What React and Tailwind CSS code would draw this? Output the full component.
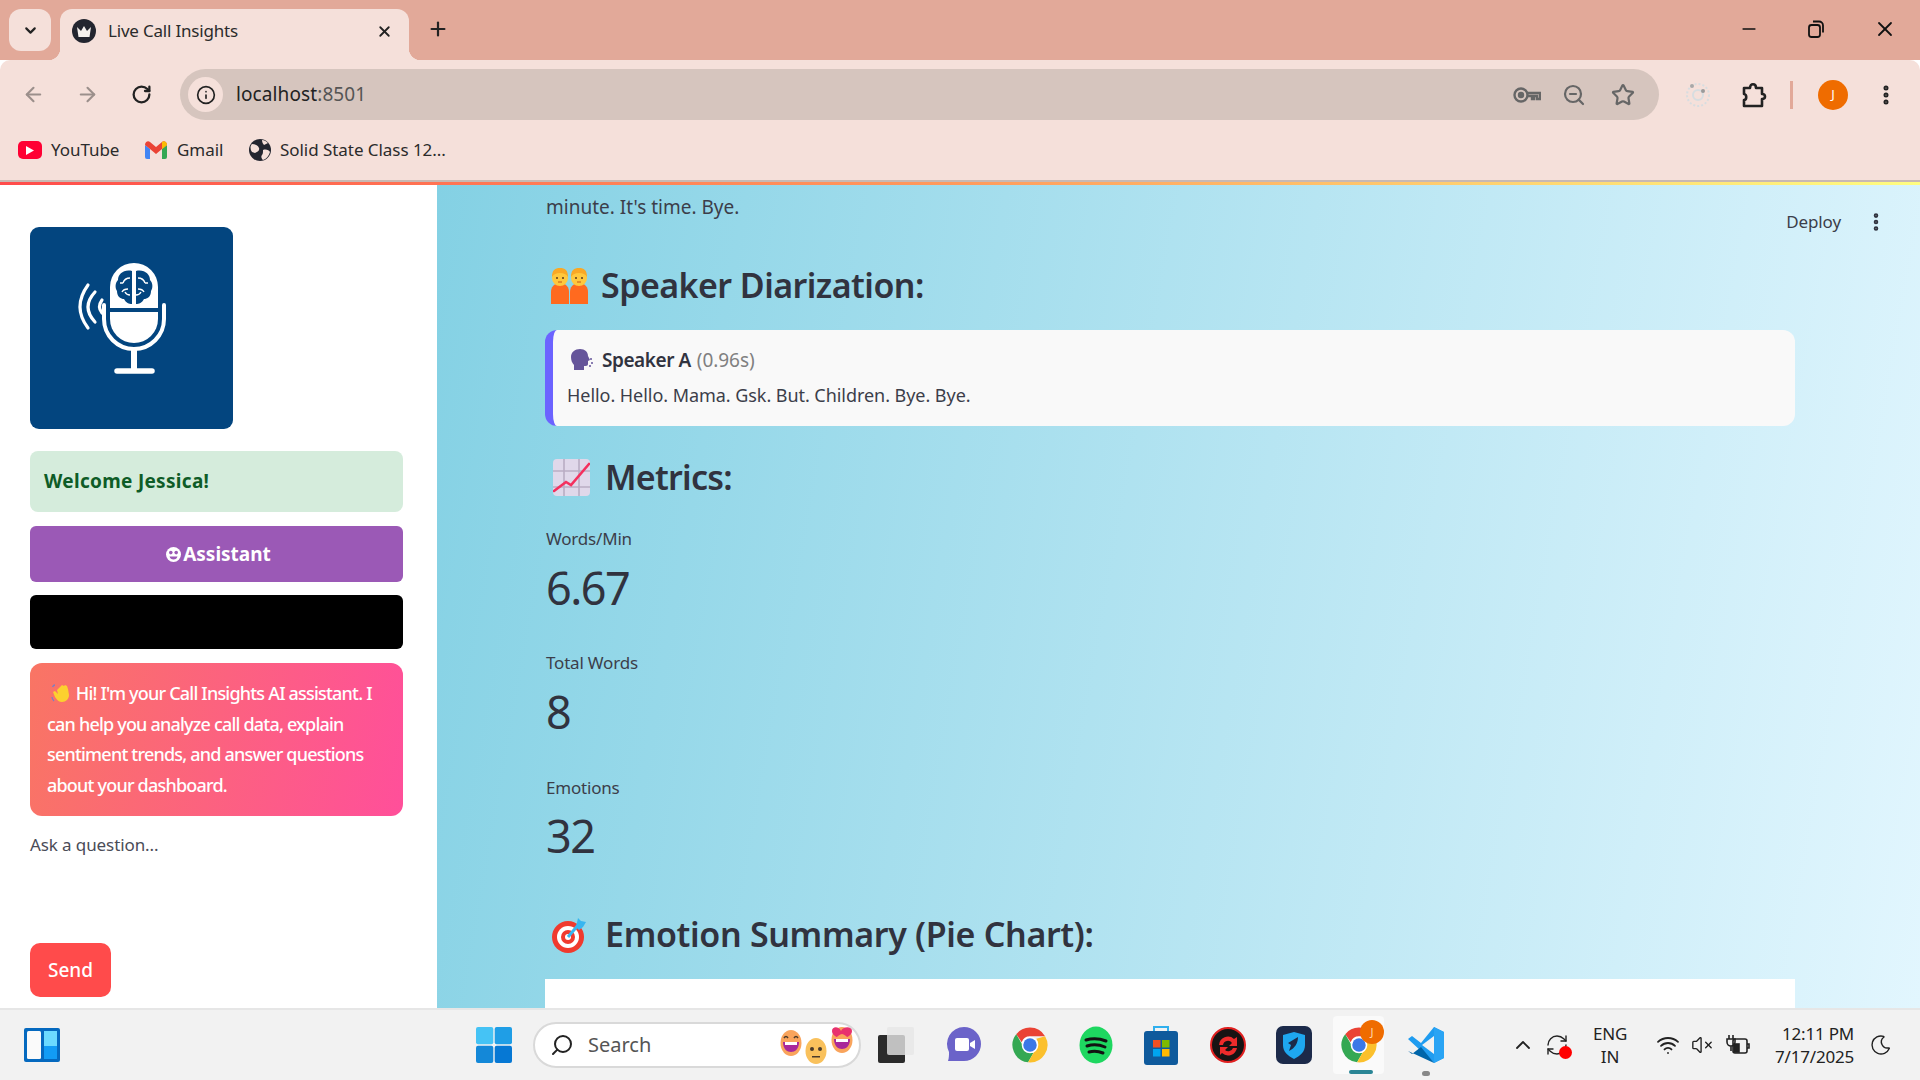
import React from 'react';
import { ArrowLeft, ArrowRight, RotateCw, Info, ZoomOut, Star, EllipsisVertical, X, Plus, ChevronDown, ChevronUp, Minus, Search, RefreshCw, Wifi, VolumeX, Moon } from 'lucide-react';

function ChromeLogo({ size = 38 }) {
  return (
    <svg width={size} height={size} viewBox="0 0 48 48">
      <path d="M24 2a22 22 0 0 1 19.05 11H24a11 11 0 0 0-10.4 7.4L6.6 10.4A22 22 0 0 1 24 2z" fill="#ea4335" />
      <path d="M6.6 10.4 16 26.6a11 11 0 0 0 12.6 6.9L21.6 45.9A22 22 0 0 1 6.6 10.4z" fill="#34a853" />
      <path d="M43.05 13A22 22 0 0 1 21.6 45.9l9.4-16.4A11 11 0 0 0 32 16z" fill="#fbc02d" />
      <circle cx="24" cy="24" r="10.5" fill="#fff" />
      <circle cx="24" cy="24" r="8.5" fill="#3b78e7" />
    </svg>
  );
}

function MicLogo() {
  return (
    <svg width="203" height="202" viewBox="0 0 203 202">
      <path d="M80 81V60a24 24 0 0 1 48 0v21z" fill="#fff" />
      <path d="M102 44c-8-2-14 3-14 9-3 3-3 8-1 11 0 6 4 8 7 8 2 4 5 5 8 5z" fill="#03457f" />
      <path d="M106 44c8-2 14 3 14 9 3 3 3 8 1 11 0 6-4 8-7 8-2 4-5 5-8 5z" fill="#03457f" />
      <path d="M100 51c-4 0-6 2-7 5m0 0h-3m8 6c-3 0-5 1-6 3m3 0c1 2 3 3 5 3M108 51c4 0 6 2 7 5m0 0h3m-10 6c3 0 5 1 6 3m-3 0c-1 2-3 3-5 3" fill="none" stroke="#fff" strokeWidth="1.4" />
      <path d="M80 85h48v7a24 24 0 0 1-48 0z" fill="#fff" />
      <path d="M74 78v14a30 30 0 0 0 60 0V78" fill="none" stroke="#fff" strokeWidth="4" strokeLinecap="round" />
      <path d="M104 122v21" stroke="#fff" strokeWidth="6" />
      <path d="M87 144h35" stroke="#fff" strokeWidth="5.5" strokeLinecap="round" />
      <path d="M58 58Q42 80 58 101M65 65Q51 80 65 95M72 73Q67 80 72 86" fill="none" stroke="#fff" strokeWidth="3.2" strokeLinecap="round" />
    </svg>
  );
}

function TwoPeople() {
  const person = (x) => (
    <g key={x}>
      <path d={`M${x} 37V25c0-5 3-8 6-8h6c3 0 6 3 6 8v12z`} fill="#ff6a1f" />
      <circle cx={x + 9} cy="11" r="8" fill="#ffc83d" />
      <path d={`M${x + 1} 10c0-7 3-9 8-9s8 2 8 9c-2-3-4-4-8-4s-6 1-8 4z`} fill="#f9a825" />
      <circle cx={x + 6} cy="11" r="1" fill="#5b3a1e" />
      <circle cx={x + 12} cy="11" r="1" fill="#5b3a1e" />
      <path d={`M${x + 7} 15h4`} stroke="#c2571a" strokeWidth="1" />
    </g>
  );
  return (
    <svg width="37" height="37" viewBox="0 0 37 37">
      {person(0)}
      {person(19)}
    </svg>
  );
}

function ChartEmoji() {
  return (
    <svg width="37" height="37" viewBox="0 0 37 37">
      <rect width="37" height="37" rx="4" fill="#e0d8ea" />
      <path d="M11 0v37M26 0v37M0 12h37M0 28h37" stroke="#b9adc4" strokeWidth="1.6" />
      <path d="M1 32l12-9 5 3L36 5" fill="none" stroke="#f4305e" strokeWidth="2.6" strokeLinecap="round" />
    </svg>
  );
}

function TargetEmoji() {
  return (
    <svg width="36" height="38" viewBox="0 0 36 38">
      <circle cx="16" cy="22" r="16" fill="#f03a2e" />
      <circle cx="16" cy="22" r="11" fill="#fff" />
      <circle cx="16" cy="22" r="7" fill="#f03a2e" />
      <circle cx="16" cy="22" r="3" fill="#fff" />
      <path d="M16 22 27 9" stroke="#37b6f0" strokeWidth="3" />
      <path d="M24 12l2-9 3 3 5 1-3 5-4 3z" fill="#37b6f0" />
    </svg>
  );
}

function SpeakingHead() {
  return (
    <svg width="22" height="22" viewBox="0 0 22 22">
      <path d="M9 0c5 0 8 3 8 7l2 4-2 1v3c0 2-2 2-4 2v4H3v-5C1 14 0 11 0 8c0-5 4-8 9-8z" fill="#65559a" />
      <circle cx="20" cy="10" r="1" fill="#65559a" />
      <circle cx="21" cy="14" r="1" fill="#65559a" />
      <circle cx="19" cy="17" r="1" fill="#65559a" />
    </svg>
  );
}

function WaveHand() {
  return (
    <svg width="21" height="20" viewBox="0 0 21 20" className="inline-block align-[-3px]">
      <path d="M6 7l5-5 2 1 1-1 2 1 1 3 1 6c0 4-3 7-7 7-3 0-5-2-7-5L2 9l2-1 3 3z" fill="#fcd02f" />
      <path d="M1 14c0 2 1 3 2 4M4 2C3 2 2 3 1.5 4" fill="none" stroke="#7b7fc4" strokeWidth="1.3" />
    </svg>
  );
}

function RobotFace() {
  return (
    <svg width="15" height="15" viewBox="0 0 15 15" className="inline-block">
      <circle cx="7.5" cy="7.5" r="7.5" fill="#fff" />
      <circle cx="4.8" cy="5.6" r="1.8" fill="#9b59b6" />
      <circle cx="10.2" cy="5.6" r="1.8" fill="#9b59b6" />
      <path d="M3.5 9.5h8c-.5 2-2 3-4 3s-3.500-1-4-3z" fill="#9b59b6" />
    </svg>
  );
}

function EmojiFace({ color, heart, neutral, className }) {
  return (
    <svg width="22" height="28" viewBox="0 0 22 28" className={className}>
      <ellipse cx="11" cy="15" rx="10.500" ry="13" fill={color} />
      {heart ? (
        <path d="M1 6c0-5 7-5 9 0 2-5 11-5 11 0 0 4-5 6-5 6s-3-3-5-3-5 3-5 3-5-2-5-6z" fill="#e8326e" />
      ) : neutral ? (
        <g fill="#4a3a2a">
          <circle cx="7" cy="13" r="2" />
          <circle cx="15" cy="13" r="2" />
          <rect x="7" y="20" width="8" height="1.500" />
        </g>
      ) : (
        <path d="M4 10q2-3 4 0M14 10q2-3 4 0" fill="none" stroke="#4a3a2a" strokeWidth="1.500" />
      )}
      {!neutral && <path d="M3 14h16c0 7-4 10-8 10s-8-3-8-10z" fill="#a9279a" />}
      {!neutral && <rect x="5" y="14" width="12" height="3" fill="#fff" />}
    </svg>
  );
}

function BrowserChrome() {
  return (
    <div className="shrink-0">
      {/* tab strip */}
      <div className="h-[60px] bg-[#e2a999] flex items-end relative">
        <div className="absolute left-[9px] top-[9px] w-[42px] h-[42px] rounded-[12px] bg-[#f5e0da] flex items-center justify-center">
          <ChevronDown size={17} strokeWidth={3} className="text-[#222]" />
        </div>
        <div className="absolute left-[48px] bottom-0 w-[12px] h-[12px] bg-[radial-gradient(circle_at_0_0,#e2a999_12px,#f5e0da_12.5px)]" />
        <div className="absolute left-[409px] bottom-0 w-[12px] h-[12px] bg-[radial-gradient(circle_at_100%_0,#e2a999_12px,#f5e0da_12.5px)]" />
        <div className="ml-[60px] w-[349px] h-[51px] bg-[#f5e0da] rounded-t-[12px] flex items-center pl-[12px] pb-[7px]">
          <div className="w-[24px] h-[24px] rounded-full bg-[#23252f] flex items-center justify-center">
            <svg width="16" height="13" viewBox="0 0 16 13"><path d="M1 2l4 4 3-5 3 5 4-4-1.500 10h-11z" fill="#f5f1ee" /></svg>
          </div>
          <span className="ml-[12px] text-[17px] text-[#2b2b2b] tracking-[-0.2px]">Live Call Insights</span>
          <X size={17} strokeWidth={2.6} className="ml-auto mr-[16px] text-[#222]" />
        </div>
        <Plus size={22} strokeWidth={2.4} className="ml-[18px] mb-[20px] text-[#222]" />
        <div className="ml-auto flex items-center h-full pb-[3px] pr-[23px] gap-[47px] text-[#111]">
          <Minus size={20} strokeWidth={2} />
          <svg width="20" height="20" viewBox="0 0 20 20" fill="none" stroke="#111" strokeWidth="1.800">
            <rect x="3" y="6" width="11" height="12" rx="2.500" />
            <path d="M7 2.500h6a4 4 0 0 1 4 4v7" />
          </svg>
          <X size={24} strokeWidth={1.8} />
        </div>
      </div>
      {/* toolbar */}
      <div className="h-[120px] bg-[#f5e0da] rounded-t-[10px] pt-[9px]">
        <div className="h-[51px] flex items-center">
          <ArrowLeft size={23} strokeWidth={2.2} className="ml-[22px] text-[#9b8f8b]" />
          <ArrowRight size={23} strokeWidth={2.2} className="ml-[31px] text-[#9b8f8b]" />
          <RotateCw size={21} strokeWidth={2.6} className="ml-[32px] text-[#222]" />
          <div className="ml-[28px] w-[1479px] h-[51px] rounded-full bg-[#d6c5be] flex items-center pl-[8px]">
            <div className="w-[35px] h-[35px] rounded-full bg-[#f5e0da] flex items-center justify-center">
              <Info size={20} strokeWidth={2} className="text-[#222]" />
            </div>
            <span className="ml-[13px] text-[19px] text-[#222] tracking-[0.1px]">localhost<span className="text-[#555]">:8501</span></span>
            <div className="ml-auto flex items-center pr-[24px] text-[#666]">
              <svg width="28" height="18" viewBox="0 0 28 18" fill="none" stroke="#666" strokeWidth="2.400">
                <circle cx="8" cy="9" r="6.500" />
                <circle cx="8" cy="9" r="2" fill="#666" />
                <path d="M14.500 7H27v6h-3v-3h-3v3h-2v-3h-4" />
              </svg>
              <ZoomOut size={24} strokeWidth={2.2} className="ml-[21px]" />
              <Star size={24} strokeWidth={2.2} className="ml-[25px]" />
            </div>
          </div>
          <svg width="26" height="28" viewBox="0 0 26 28" className="ml-[26px]">
            <circle cx="13" cy="14" r="11" fill="none" stroke="#d7dde0" strokeWidth="2" strokeDasharray="2 2" />
            <circle cx="13" cy="14" r="5" fill="none" stroke="#d7dde0" strokeWidth="2" />
            <circle cx="7" cy="5" r="2" fill="#a8a8a8" />
            <circle cx="18" cy="10" r="2" fill="#9a9a9a" />
          </svg>
          <svg width="26" height="28" viewBox="0 0 26 28" fill="none" stroke="#222" strokeWidth="2.600" strokeLinejoin="round" className="ml-[30px]">
            <path d="M3 7h6c0-5 6-5 6 0h6v6c4 0 4 5 0 5v7H3v-6c3 0 3-6 0-6z" />
          </svg>
          <div className="ml-[23px] w-[3px] h-[28px] bg-[#e2a999]" />
          <div className="ml-[25px] w-[30px] h-[30px] rounded-full bg-[#ef6c00] flex items-center justify-center text-white text-[13px]">J</div>
          <EllipsisVertical size={24} strokeWidth={3} className="ml-[26px] text-[#222]" />
        </div>
        {/* bookmarks */}
        <div className="mt-[15px] flex items-center h-[30px] text-[17px] text-[#2b2b2b] tracking-[-0.05px]">
          <div className="ml-[18px] w-[24px] h-[18px] rounded-[5px] bg-[#ff0033] flex items-center justify-center">
            <svg width="8" height="9" viewBox="0 0 8 9"><path d="M0 0l8 4.500L0 9z" fill="#fff" /></svg>
          </div>
          <span className="ml-[9px] w-[69px] whitespace-nowrap">YouTube</span>
          <svg width="22" height="18" viewBox="0 0 22 18" className="ml-[25px]">
            <path d="M0 4v12a2 2 0 0 0 2 2h3V8z" fill="#4285f4" />
            <path d="M22 4v12a2 2 0 0 1-2 2h-3V8z" fill="#34a853" />
            <path d="M0 4c0-3 3-5 5-3l6 5 6-5c2-2 5 0 5 3l-5 4-6 5-6-5z" fill="#ea4335" />
            <path d="M17 1c2-2 5 0 5 3l-5 4z" fill="#fbbc04" />
          </svg>
          <span className="ml-[10px] w-[46px]">Gmail</span>
          <svg width="22" height="22" viewBox="0 0 22 22" className="ml-[26px]">
            <circle cx="11" cy="11" r="11" fill="#23252f" />
            <path d="M3 5c3 0 6 1 7 4s-2 4-4 5l-3-1C1 10 1 7 3 5zM14 11c3-1 6 0 7 2-1 4-4 7-7 8-2-2-2-4-1-5s1-3 1-5zM13 1c2 0 4 1 6 3l-4 2c-1-1-2-3-2-5z" fill="#f5e0da" />
          </svg>
          <span className="ml-[9px] whitespace-nowrap">Solid State Class 12...</span>
        </div>
      </div>
      {/* streamlit decoration */}
      <div className="h-[2px] bg-[#c9b8b2]" />
      <div className="h-[3px] bg-gradient-to-r from-[#ff4b4b] via-[#ff9a5c] to-[#fffd80]" />
    </div>
  );
}

function Sidebar() {
  return (
    <aside className="w-[437px] shrink-0 bg-white pl-[30px] pr-[34px] overflow-hidden">
      <div className="mt-[42px] w-[203px] h-[202px] rounded-[9px] bg-[#03457f]">
        <MicLogo />
      </div>
      <div className="mt-[22px] h-[61px] rounded-lg bg-[#d5ecdc] flex items-center pl-[14px] font-bold text-[19px] text-[#0e5c27] tracking-[0.3px]">
        Welcome Jessica!
      </div>
      <div className="mt-[14px] h-[56px] pl-[4px] rounded-[6px] bg-[#9b59b6] flex items-center justify-center gap-[2px] font-bold text-[19px] text-white">
        <RobotFace />
        <span>Assistant</span>
      </div>
      <div className="mt-[13px] h-[54px] rounded-[6px] bg-black" />
      <div className="mt-[14px] h-[153px] rounded-[12px] bg-[linear-gradient(100deg,#f97564,#ff4f9a)] pl-[17px] pt-[15px] text-[18px] leading-[30.500px] text-white tracking-[-0.8px] font-medium whitespace-nowrap">
        <div>&nbsp;<WaveHand /> Hi! I'm your Call Insights AI assistant. I</div>
        <div>can help you analyze call data, explain</div>
        <div>sentiment trends, and answer questions</div>
        <div>about your dashboard.</div>
      </div>
      <div className="mt-[17px] h-[24px] leading-[24px] text-[17px] text-[#4a4c57] tracking-[-0.1px]">Ask a question...</div>
      <div className="mt-[86px] w-[81px] h-[54px] rounded-[10px] bg-[#ff4b4b] flex items-center justify-center text-[19px] text-white font-medium">
        Send
      </div>
    </aside>
  );
}

function Heading({ icon, gap, mt, spacing, children }) {
  return (
    <div className={`flex items-center h-[46px] font-semibold text-[34px] text-[#31333f] whitespace-nowrap ${spacing} ${mt}`}>
      {icon}
      <span className={gap}>{children}</span>
    </div>
  );
}

function Metric({ label, value, mt, valueMt }) {
  return (
    <div className="pl-[1px]">
      <div className={`h-[24px] leading-[24px] text-[17px] text-[#3c3e4a] tracking-[-0.2px] ${mt}`}>{label}</div>
      <div className={`h-[58px] leading-[58px] text-[45px] text-[#31333f] tracking-[-1.5px] ${valueMt}`}>{value}</div>
    </div>
  );
}

function Main() {
  return (
    <main className="flex-1 relative overflow-hidden bg-[linear-gradient(100deg,#84d1e4,#e2f6fe)] pl-[108px] pr-[125px]">
      <div className="absolute right-[79px] top-[25px] h-[24px] leading-[24px] text-[17px] text-[#3c3e4a] tracking-[-0.1px]">Deploy</div>
      <EllipsisVertical size={22} strokeWidth={3} className="absolute right-[33px] top-[26px] text-[#31333f]" />
      <div className="mt-[7px] pl-[1px] h-[30px] leading-[30px] text-[19px] text-[#3c3e4a]">minute. It's time. Bye.</div>
      <Heading mt="mt-[40px]" gap="ml-[13px]" spacing="tracking-[-0.55px]" icon={<span className="ml-[6px]"><TwoPeople /></span>}>Speaker Diarization:</Heading>
      <div className="mt-[22px] h-[96px] rounded-[12px] border-l-[8px] border-[#6c63ff] bg-[#f9f9f9] pl-[14px] pt-[15px]">
        <div className="flex items-center h-[30px] text-[19px] whitespace-nowrap tracking-[-0.45px]">
          <span className="ml-[4px]"><SpeakingHead /></span>
          <span className="ml-[9px] font-semibold text-[#31333f]">Speaker A</span>
          <span className="ml-[6px] text-[#808080] tracking-[-0.05px]">(0.96s)</span>
        </div>
        <div className="mt-[5px] h-[30px] leading-[30px] text-[18px] text-[#3c3e4a] tracking-[-0.05px] whitespace-nowrap">Hello. Hello. Mama. Gsk. But. Children. Bye. Bye.</div>
      </div>
      <Heading mt="mt-[28px]" gap="ml-[15px]" spacing="tracking-[-0.75px]" icon={<span className="ml-[8px]"><ChartEmoji /></span>}>Metrics:</Heading>
      <Metric label="Words/Min" value="6.67" mt="mt-[27px]" valueMt="mt-[8px]" />
      <Metric label="Total Words" value="8" mt="mt-[34px]" valueMt="mt-[8px]" />
      <Metric label="Emotions" value="32" mt="mt-[35px]" valueMt="mt-[7px]" />
      <Heading mt="mt-[46px]" gap="ml-[17px]" spacing="tracking-[-0.33px]" icon={<span className="ml-[7px]"><TargetEmoji /></span>}>Emotion Summary (Pie Chart):</Heading>
      <div className="mt-[22px] h-[400px] bg-white" />
    </main>
  );
}

function Taskbar() {
  return (
    <div className="h-[72px] shrink-0 bg-[#f2f2f2] border-t-[2px] border-[#e6e6e6] flex items-center relative text-[#111]">
      <svg width="36" height="34" viewBox="0 0 36 34" className="ml-[24px]">
        <rect width="36" height="34" rx="2" fill="#0569bf" />
        <rect x="3" y="3" width="14" height="28" rx="1.500" fill="#fafafa" />
        <rect x="20" y="3" width="13" height="15" fill="#6bdaff" />
        <rect x="20" y="18" width="13" height="13" fill="#129cf5" />
      </svg>
      <svg width="36" height="36" viewBox="0 0 36 36" className="ml-[416px]">
        <rect width="17.300" height="17.300" rx="2" fill="#45c3f5" />
        <rect x="18.700" width="17.300" height="17.300" rx="2" fill="#1f9ee6" />
        <rect y="18.700" width="17.300" height="17.300" rx="2" fill="#1488d8" />
        <rect x="18.700" y="18.700" width="17.300" height="17.300" rx="2" fill="#0678d4" />
      </svg>
      <div className="ml-[21px] w-[328px] h-[46px] rounded-full bg-white border-[2px] border-[#d9d9d9] flex items-center pl-[15px] relative">
        <Search size={24} strokeWidth={2} className="-scale-x-100 text-[#222]" />
        <span className="ml-[14px] text-[20px] text-[#555]">Search</span>
        <div className="absolute right-[3px] top-[1px] h-[40px] w-[76px]">
          <EmojiFace color="#f9a45c" className="absolute left-0 top-[3px]" />
          <EmojiFace color="#f9c15c" neutral className="absolute left-[25px] top-[11px]" />
          <EmojiFace color="#f9a45c" heart className="absolute left-[51px] top-0" />
        </div>
      </div>
      <div className="ml-[17px] w-[36px] h-[36px] relative">
        <div className="absolute left-0 bottom-0 w-[27px] h-[28px] bg-[#2b2b2b] rounded-[2px]" />
        <div className="absolute right-0 top-0 w-[27px] h-[28px] bg-[#e6e6e6]/80 rounded-[2px]" />
      </div>
      <svg width="36" height="38" viewBox="0 0 36 38" className="ml-[32px]">
        <path d="M18 1a17 17 0 0 1 0 34H2c1-3 1-6 1-9A17 17 0 0 1 18 1z" fill="#6b63c9" />
        <rect x="9" y="12" width="14" height="13" rx="2" fill="#fff" />
        <path d="M24 17l5-3v9l-5-3z" fill="#fff" />
      </svg>
      <span className="ml-[29px]"><ChromeLogo size={38} /></span>
      <svg width="34" height="38" viewBox="0 0 34 38" className="ml-[30px]">
        <ellipse cx="17" cy="19" rx="16.500" ry="18.500" fill="#1ed760" />
        <path d="M7 14q10-3 20 1M8 20q9-3 18 1M10 26q7-2 14 1" fill="none" stroke="#121212" strokeWidth="3" strokeLinecap="round" />
      </svg>
      <svg width="34" height="40" viewBox="0 0 34 40" className="ml-[31px]">
        <path d="M10 7V2h14v5" fill="none" stroke="#30b0ee" strokeWidth="2" />
        <rect y="6" width="34" height="34" rx="3" fill="#0f5a9c" />
        <rect x="9" y="15" width="7.500" height="7.500" fill="#f25022" />
        <rect x="18" y="15" width="7.500" height="7.500" fill="#7fba00" />
        <rect x="9" y="24" width="7.500" height="7.500" fill="#00a4ef" />
        <rect x="18" y="24" width="7.500" height="7.500" fill="#ffb900" />
      </svg>
      <svg width="36" height="36" viewBox="0 0 36 36" className="ml-[32px]">
        <circle cx="18" cy="18" r="17" fill="#171313" stroke="#e02020" strokeWidth="2" />
        <path d="M9 18a9 9 0 0 1 15-6l3-2v9h-8l3-3a5 5 0 0 0-9 2zM27 21a9 9 0 0 1-15 5l-2 2v-8h8l-3 3a5 5 0 0 0 8-2z" fill="#ee2b2b" />
      </svg>
      <svg width="36" height="38" viewBox="0 0 36 38" className="ml-[30px]">
        <rect width="36" height="38" rx="7" fill="#1c2a4a" />
        <path d="M18 6l11 3v10c0 7-5 11-11 14-6-3-11-7-11-14V9z" fill="#1ea7f0" />
        <path d="M22 11c0 6-3 11-9 14l2-6-3-2z" fill="#1c2a4a" />
      </svg>
      <div className="ml-[21px] w-[51px] h-[58px] bg-[#fafafa] rounded-[4px] flex items-center justify-center relative">
        <ChromeLogo size={38} />
        <div className="absolute right-[0px] top-[4px] w-[24px] h-[24px] rounded-full bg-[#ef6c00] flex items-center justify-center text-[11px] text-[#ffd9b0]">J</div>
        <div className="absolute left-[16px] bottom-0 w-[24px] h-[4px] rounded-full bg-[#2a8595]" />
      </div>
      <div className="ml-[24px] w-[36px] h-[36px] relative">
        <svg width="36" height="36" viewBox="0 0 36 36">
          <path d="M26 0 36 5v26l-10 5L0 12l4-3 9 7L26 0z" fill="#1f9cf0" />
          <path d="M26 36 0 24l4 3 9-7 13 16z" fill="#0065a9" />
          <path d="M26 0v36l10-5V5z" fill="#2aa4f4" />
          <path d="M26 9v18l-12-9z" fill="#f2f2f2" />
        </svg>
        <div className="absolute left-[14px] top-[44px] w-[8px] h-[5px] rounded-full bg-[#888]" />
      </div>
      <ChevronUp size={24} strokeWidth={1.8} className="ml-[67px] text-[#222]" />
      <div className="ml-[10px] relative w-[24px] h-[24px]">
        <RefreshCw size={24} strokeWidth={1.4} className="text-[#222]" />
        <div className="absolute right-[-3px] bottom-[-2px] w-[13px] h-[13px] rounded-full bg-[#ff0000]" />
      </div>
      <div className="ml-[16px] w-[50px] text-center text-[17px] leading-[23px] text-[#222] tracking-[-0.2px]">
        <div>ENG</div>
        <div>IN</div>
      </div>
      <Wifi size={24} strokeWidth={1.8} className="ml-[21px] text-[#222]" />
      <VolumeX size={22} strokeWidth={1.5} className="ml-[11px] text-[#222]" />
      <svg width="24" height="24" viewBox="0 0 24 24" fill="none" stroke="#222" strokeWidth="1.600" className="ml-[13px]">
        <rect x="7" y="6" width="14" height="14" rx="2" />
        <path d="M21 11h2v4h-2" />
        <rect x="8" y="11" width="5" height="8" fill="#222" />
        <path d="M3 2v4M7 2v4M1 6h8v3a4 4 0 0 1-8 0zM5 13v5" />
      </svg>
      <div className="ml-[13px] w-[91px] text-right text-[17px] leading-[23px] text-[#222] tracking-[-0.2px] whitespace-nowrap">
        <div>12:11 PM</div>
        <div>7/17/2025</div>
      </div>
      <Moon size={24} strokeWidth={1.4} className="ml-[15px] rotate-[20deg] text-[#222]" />
    </div>
  );
}

export default function App() {
  return (
    <div className="w-[1920px] h-[1080px] flex flex-col overflow-hidden font-['Noto_Sans',sans-serif]">
      <BrowserChrome />
      <div className="flex-1 flex min-h-0">
        <Sidebar />
        <Main />
      </div>
      <Taskbar />
    </div>
  );
}
